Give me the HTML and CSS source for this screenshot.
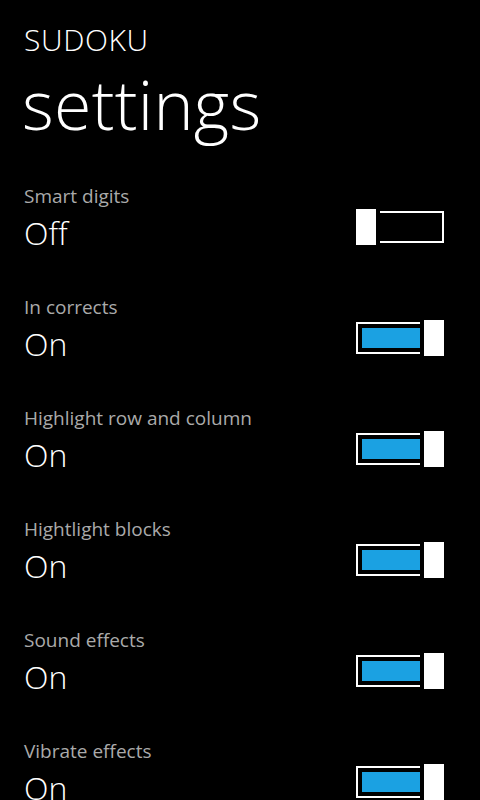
FILE: index.html
```html
<!DOCTYPE html>
<html lang="en">
<head>
<meta charset="utf-8">
<title>Sudoku settings</title>
<link rel="stylesheet" href="styles.css">
</head>
<body>
<div class="page">
  <header class="header">
    <div class="app-title">SUDOKU</div>
    <h1 class="page-title">settings</h1>
  </header>
  <div class="list">
    <div class="row">
      <div class="text">
        <div class="label">Smart digits</div>
        <div class="value">Off</div>
      </div>
      <div class="toggle off"><div class="track"><div class="fill"></div></div><div class="thumb"></div></div>
    </div>
    <div class="row">
      <div class="text">
        <div class="label">In corrects</div>
        <div class="value">On</div>
      </div>
      <div class="toggle on"><div class="track"><div class="fill"></div></div><div class="thumb"></div></div>
    </div>
    <div class="row">
      <div class="text">
        <div class="label">Highlight row and column</div>
        <div class="value">On</div>
      </div>
      <div class="toggle on"><div class="track"><div class="fill"></div></div><div class="thumb"></div></div>
    </div>
    <div class="row">
      <div class="text">
        <div class="label">Hightlight blocks</div>
        <div class="value">On</div>
      </div>
      <div class="toggle on"><div class="track"><div class="fill"></div></div><div class="thumb"></div></div>
    </div>
    <div class="row">
      <div class="text">
        <div class="label">Sound effects</div>
        <div class="value">On</div>
      </div>
      <div class="toggle on"><div class="track"><div class="fill"></div></div><div class="thumb"></div></div>
    </div>
    <div class="row">
      <div class="text">
        <div class="label">Vibrate effects</div>
        <div class="value">On</div>
      </div>
      <div class="toggle on"><div class="track"><div class="fill"></div></div><div class="thumb"></div></div>
    </div>
  </div>
</div>
</body>
</html>
```
FILE: styles.css
```css
html, body {
  margin: 0;
  padding: 0;
  background: #000;
}
body {
  width: 480px;
  height: 800px;
  overflow: hidden;
  color: #fff;
  font-family: "Open Sans", "Noto Sans", sans-serif;
}
.page {
  padding: 22px 36px 0 24px;
}
.header {
  display: flex;
  flex-direction: column;
}
.app-title {
  font-size: 30px;
  line-height: 36px;
  font-weight: 300;
  letter-spacing: 0.6px;
}
.page-title {
  margin: 6px 0 0 -2px;
  font-size: 68px;
  line-height: 80px;
  font-weight: 300;
  letter-spacing: 0.3px;
}
.list {
  margin-top: 40px;
  display: flex;
  flex-direction: column;
}
.row {
  height: 111px;
  display: flex;
  justify-content: space-between;
  align-items: flex-start;
}
.label {
  font-size: 19px;
  line-height: 24px;
  color: #aaaaaa;
}
.value {
  margin-top: 6px;
  font-size: 32px;
  line-height: 38px;
  font-weight: 300;
}
.toggle {
  position: relative;
  width: 88px;
  height: 36px;
  margin-top: 25px;
}
.track {
  position: absolute;
  top: 2px;
  bottom: 2px;
  left: 0;
  right: 0;
  border: 2px solid #fff;
  padding: 4px;
}
.fill {
  height: 100%;
  background: #1ba1e2;
}
.off .fill {
  background: transparent;
}
.thumb {
  position: absolute;
  top: 0;
  width: 20px;
  height: 36px;
  background: #fff;
}
.off .thumb {
  left: 0;
  border-right: 4px solid #000;
}
.on .thumb {
  right: 0;
  border-left: 4px solid #000;
}
```
